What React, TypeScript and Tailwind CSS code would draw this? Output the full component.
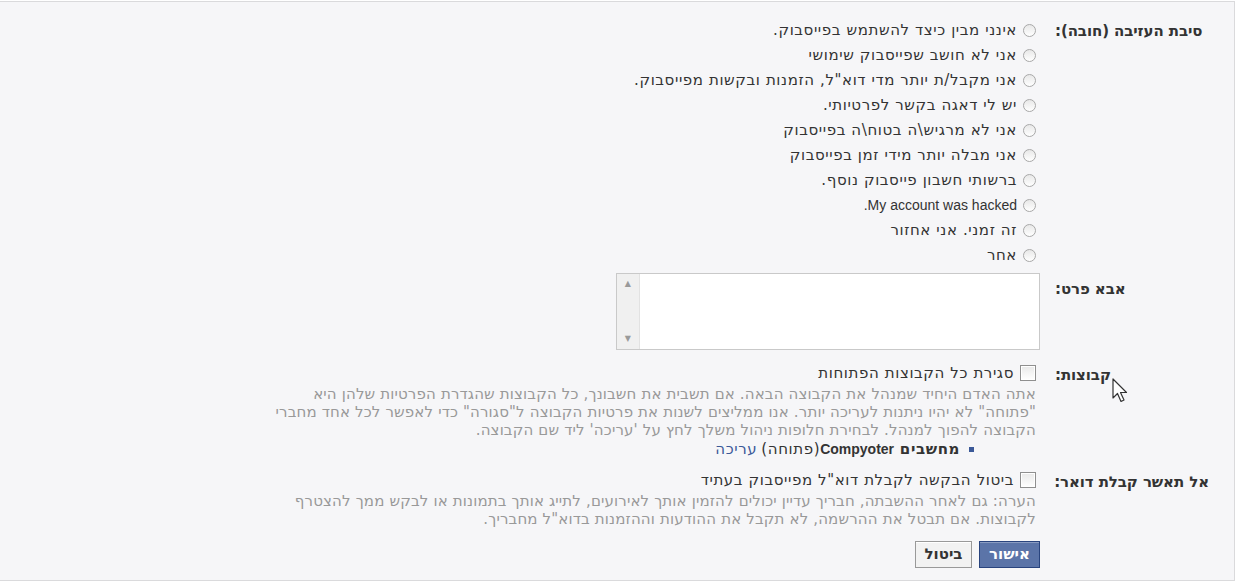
import React from 'react'

const reasons = [
    { t: 'אינני מבין כיצד להשתמש בפייסבוק.' },
    { t: 'אני לא חושב שפייסבוק שימושי' },
    { t: 'אני מקבל/ת יותר מדי דוא"ל, הזמנות ובקשות מפייסבוק.' },
    { t: 'יש לי דאגה בקשר לפרטיותי.' },
    { t: 'אני לא מרגיש\\ה בטוח\\ה בפייסבוק' },
    { t: 'אני מבלה יותר מידי זמן בפייסבוק' },
    { t: 'ברשותי חשבון פייסבוק נוסף.' },
    { t: 'My account was hacked.', latin: true },
    { t: 'זה זמני. אני אחזור' },
    { t: 'אחר' },
]

const Radio = () => (
    <span className="inline-block w-[13px] h-[13px] rounded-full border border-[#a8a8a8] bg-gradient-to-b from-[#e8e8e8] to-white shrink-0" />
)

const Checkbox = () => (
    <span className="inline-block w-[16px] h-[16px] border border-[#8f8f8f] bg-gradient-to-b from-[#e9e9e9] to-white shadow-[inset_0_0_0_1px_#fff] shrink-0" />
)

// labels sit at the left edge of their column
const lbl = "w-[173px] shrink-0 pl-[19px] text-left font-bold tracking-[-0.1px] whitespace-nowrap"

export default function App() {
    return (
        <div className="bg-white w-[1238px] h-[585px] overflow-hidden" style={{ fontFamily: '"DejaVu Sans", sans-serif' }}>
            <div dir="rtl" className="relative mt-[1px] w-[1235px] h-[580px] bg-[#f6f6f8] border-t border-r border-b border-[#dadadc] pr-[25px] pt-[16px] text-[15px] tracking-[0.6px] text-[#333]">

                {/* reason */}
                <div className="flex">
                    <div className={lbl + " leading-[25px] pt-[1px]"}>סיבת העזיבה (חובה):</div>
                    <div className="flex flex-col">
                        {reasons.map((r) => (
                            <label key={r.t} className="flex items-center gap-[6px] h-[25px] whitespace-nowrap">
                                <Radio />
                                {r.latin ? (
                                    <span className="font-['Liberation_Sans'] text-[14px] tracking-normal">{r.t}</span>
                                ) : (
                                    <span>{r.t}</span>
                                )}
                            </label>
                        ))}
                    </div>
                </div>

                {/* details */}
                <div className="flex mt-[5px]">
                    <div className={lbl + " pt-[5px]"}>אבא פרט:</div>
                    <div className="mr-[-4px] w-[424px] h-[77px] border border-[#c9c9c9] bg-white flex">
                        <div className="flex-1" />
                        <div className="w-[23px] bg-[#f0f0f0] border-r border-[#e2e2e2] flex flex-col justify-between items-center py-[6px] text-[8px] text-[#9a9a9a] leading-none">
                            <span>▲</span>
                            <span>▼</span>
                        </div>
                    </div>
                </div>

                {/* groups */}
                <div className="flex mt-[14px]">
                    <div className={lbl}>קבוצות:</div>
                    <div className="flex flex-col">
                        <label className="flex items-center gap-[6px] h-[18px] whitespace-nowrap">
                            <Checkbox />
                            <span>סגירת כל הקבוצות הפתוחות</span>
                        </label>
                        <p className="text-[#999] leading-[18px] tracking-[0.15px] whitespace-nowrap mt-[3px]">
                            אתה האדם היחיד שמנהל את הקבוצה הבאה. אם תשבית את חשבונך, כל הקבוצות שהגדרת הפרטיות שלהן היא<br />
                            "פתוחה" לא יהיו ניתנות לעריכה יותר. אנו ממליצים לשנות את פרטיות הקבוצה ל"סגורה" כדי לאפשר לכל אחד מחברי<br />
                            הקבוצה להפוך למנהל. לבחירת חלופות ניהול משלך לחץ על 'עריכה' ליד שם הקבוצה.
                        </p>
                        <div className="flex items-center h-[19px] mt-[1px] pr-[62px] whitespace-nowrap">
                            <span className="w-[5px] h-[5px] bg-[#3b5998] ml-[9px]" />
                            <b>מחשבים <span className="font-['Liberation_Sans'] text-[14px] tracking-normal">Compyoter</span></b>
                            <span>(פתוחה)</span>
                            <span className="text-[#3b5998] mr-[4px]">עריכה</span>
                        </div>
                    </div>
                </div>

                {/* email */}
                <div className="flex mt-[12px]">
                    <div className={lbl}>אל תאשר קבלת דואר:</div>
                    <div className="flex flex-col">
                        <label className="flex items-center gap-[6px] h-[18px] whitespace-nowrap">
                            <Checkbox />
                            <span>ביטול הבקשה לקבלת דוא"ל מפייסבוק בעתיד</span>
                        </label>
                        <p className="text-[#999] leading-[18px] tracking-[0.15px] whitespace-nowrap mt-[3px]">
                            הערה: גם לאחר ההשבתה, חבריך עדיין יכולים להזמין אותך לאירועים, לתייג אותך בתמונות או לבקש ממך להצטרף<br />
                            לקבוצות. אם תבטל את ההרשמה, לא תקבל את ההודעות וההזמנות בדוא"ל מחבריך.
                        </p>
                        <div className="flex gap-[7px] mt-[13px] mr-[-4px]">
                            <button className="h-[27px] w-[61px] bg-[#5b74a8] border border-[#29447e] text-white font-bold tracking-normal shadow-[inset_0_1px_0_#8a9cc2]">אישור</button>
                            <button className="h-[27px] w-[57px] bg-[#f2f2f2] border border-[#999] text-[#333] font-bold tracking-normal shadow-[inset_0_1px_0_#fff]">ביטול</button>
                        </div>
                    </div>
                </div>

                {/* mouse pointer */}
                <svg className="absolute left-[1112px] top-[376px]" width="18" height="26" viewBox="0 0 18 26">
                    <path d="M1 1 L1 20 L5.5 15.5 L9 23.5 L12 22 L8.5 14.5 L14.5 14.5 Z" fill="#fff" stroke="#333" strokeWidth="1.2" strokeLinejoin="round" />
                </svg>
            </div>
        </div>
    )
}
